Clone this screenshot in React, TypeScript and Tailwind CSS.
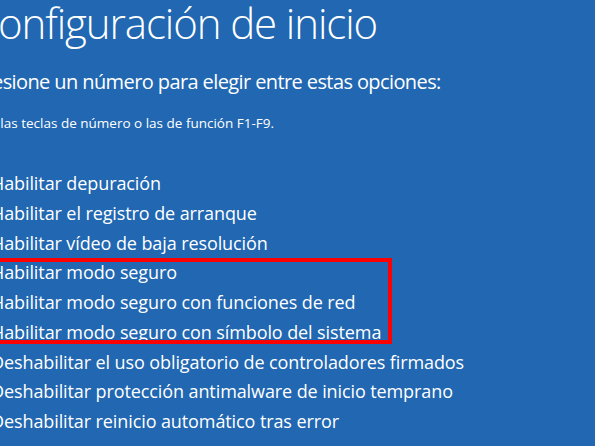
const options = [
  "Habilitar depuración",
  "Habilitar el registro de arranque",
  "Habilitar vídeo de baja resolución",
  "Habilitar modo seguro",
  "Habilitar modo seguro con funciones de red",
  "Habilitar modo seguro con símbolo del sistema",
  "Deshabilitar el uso obligatorio de controladores firmados",
  "Deshabilitar protección antimalware de inicio temprano",
  "Deshabilitar reinicio automático tras error",
];

const App: React.FC = () => {
  return (
    <div className="w-[595px] h-[446px] overflow-hidden bg-[#2167b1] text-white font-['Open_Sans',sans-serif]">
      <div className="-ml-[27px]">
        <h1 className="text-[42px] font-light leading-[48px] mt-[-1px] tracking-[-1.1px]">
          Configuración de inicio
        </h1>

        <p className="text-[20px] leading-[28px] mt-[21px] tracking-[-0.6px]">
          Presione un número para elegir entre estas opciones:
        </p>
        <p className="text-[13.5px] leading-[20px] mt-[17px]">
          Use las teclas de número o las de función F1-F9.
        </p>

        {/* Opciones de arranque; las de modo seguro van recuadradas */}
        <div className="relative -ml-[2px] mt-[36px] text-[18px] leading-[29.75px] tracking-[-0.1px]">
          {options.map((label, i) => (
            <div key={label} className="whitespace-nowrap">
              {i + 1}) {label}
            </div>
          ))}
          <div className="absolute left-0 top-[89px] w-[421px] h-[86px] border-4 border-[#ff0000]" />
        </div>
      </div>
    </div>
  );
};

export default App;
